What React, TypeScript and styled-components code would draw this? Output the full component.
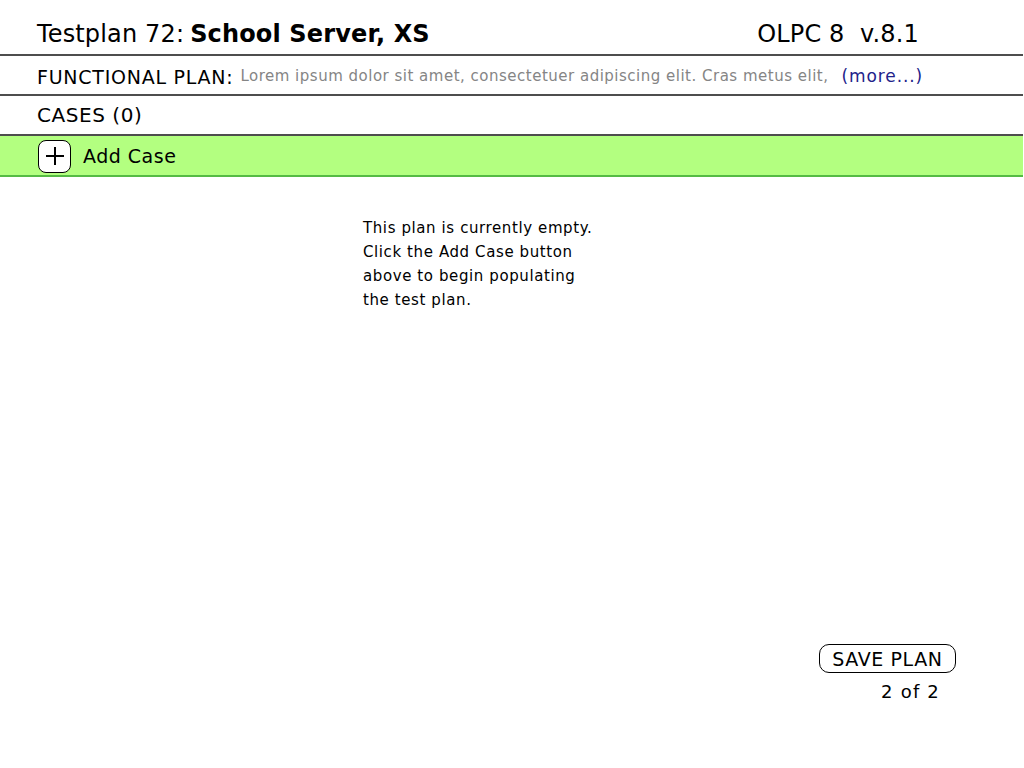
import React from 'react';
import styled, { createGlobalStyle } from 'styled-components';

const GlobalStyle = createGlobalStyle`
  html, body {
    margin: 0;
    padding: 0;
    background: #ffffff;
  }
  body {
    font-family: "DejaVu Sans", Verdana, sans-serif;
    color: #000000;
  }
`;

const Page = styled.div`
  width: 1024px;
  height: 768px;
  display: flex;
  flex-direction: column;
  overflow: hidden;
`;

interface RowProps {
  height: number;
}

const Row = styled.div<RowProps>`
  height: ${(props) => props.height}px;
  display: flex;
  align-items: flex-end;
  padding-left: 37px;
  border-bottom: 2px solid #4d4d4d;
  box-sizing: content-box;
  margin-right: 1px;
`;

const Header = styled(Row)`
  padding-right: 104px;
  padding-bottom: 6px;
`;

const Title = styled.span`
  font-size: 24px;
  letter-spacing: 0.15px;
  white-space: pre;
`;

const TitleStrong = styled.span`
  font-size: 24px;
  font-weight: bold;
  letter-spacing: 0.15px;
  margin-left: 6px;
`;

const Version = styled.span`
  margin-left: auto;
  font-size: 24px;
  letter-spacing: 0.15px;
  white-space: pre;
`;

const PlanRow = styled(Row)`
  padding-bottom: 6px;
`;

interface LabelProps {
  size: number;
  spacing: number;
}

const Label = styled.span<LabelProps>`
  font-size: ${(props) => props.size}px;
  letter-spacing: ${(props) => props.spacing}px;
`;

const Summary = styled.span`
  font-size: 15px;
  letter-spacing: 0.5px;
  color: #858585;
  margin-left: 7px;
  margin-bottom: 3px;
`;

const More = styled.a`
  font-size: 17px;
  letter-spacing: 0.9px;
  color: #22228a;
  margin-left: 13px;
  margin-bottom: 2px;
  text-decoration: none;
`;

const CasesRow = styled(Row)`
  padding-bottom: 7px;
`;

const AddBar = styled.div`
  height: 39px;
  display: flex;
  align-items: center;
  padding-left: 38px;
  background: #b3ff80;
  border-bottom: 2px solid #55bb44;
  margin-right: 1px;
`;

const PlusBox = styled.span`
  width: 31px;
  height: 31px;
  border: 1.5px solid #000000;
  border-radius: 8px;
  background: #ffffff;
  display: flex;
  align-items: center;
  justify-content: center;
  margin-top: 1px;
`;

const AddLabel = styled.span`
  font-size: 19px;
  letter-spacing: 0.5px;
  margin-left: 12px;
`;

const Content = styled.div`
  flex: 1;
  padding: 39px 0 0 363px;
`;

const Message = styled.p`
  margin: 0;
  width: 260px;
  font-size: 15px;
  letter-spacing: 0.6px;
  line-height: 24px;
`;

const Footer = styled.div`
  display: flex;
  flex-direction: column;
  align-items: flex-end;
  padding: 0 68px 66px 0;
`;

const SaveButton = styled.button`
  font-family: "DejaVu Sans", Verdana, sans-serif;
  font-size: 19px;
  letter-spacing: 0.6px;
  color: #000000;
  background: #ffffff;
  border: 1.5px solid #000000;
  border-radius: 10px;
  height: 29px;
  width: 137px;
  padding: 0;
  line-height: 24px;
`;

const Pager = styled.div`
  font-size: 18px;
  letter-spacing: 1.2px;
  margin-top: 8px;
  margin-right: 16px;
`;

function PlusIcon() {
  return (
    <svg width="22" height="22" viewBox="0 0 22 22">
      <path d="M11 2V20M2 11H20" stroke="#000" strokeWidth={2} />
    </svg>
  );
}

export default function App() {
  return (
    <Page>
      <GlobalStyle />
      <Header height={48}>
        <Title>Testplan 72:</Title>
        <TitleStrong>School Server, XS</TitleStrong>
        <Version>OLPC 8  v.8.1</Version>
      </Header>
      <PlanRow height={32}>
        <Label size={19} spacing={0.75}>FUNCTIONAL PLAN:</Label>
        <Summary>Lorem ipsum dolor sit amet, consectetuer adipiscing elit. Cras metus elit,</Summary>
        <More href="#">(more...)</More>
      </PlanRow>
      <CasesRow height={31}>
        <Label size={20} spacing={0.55}>CASES (0)</Label>
      </CasesRow>
      <AddBar>
        <PlusBox>
          <PlusIcon />
        </PlusBox>
        <AddLabel>Add Case</AddLabel>
      </AddBar>
      <Content>
        <Message>
          This plan is currently empty.
          <br />
          Click the Add Case button
          <br />
          above to begin populating
          <br />
          the test plan.
        </Message>
      </Content>
      <Footer>
        <SaveButton>SAVE PLAN</SaveButton>
        <Pager>2 of 2</Pager>
      </Footer>
    </Page>
  );
}
